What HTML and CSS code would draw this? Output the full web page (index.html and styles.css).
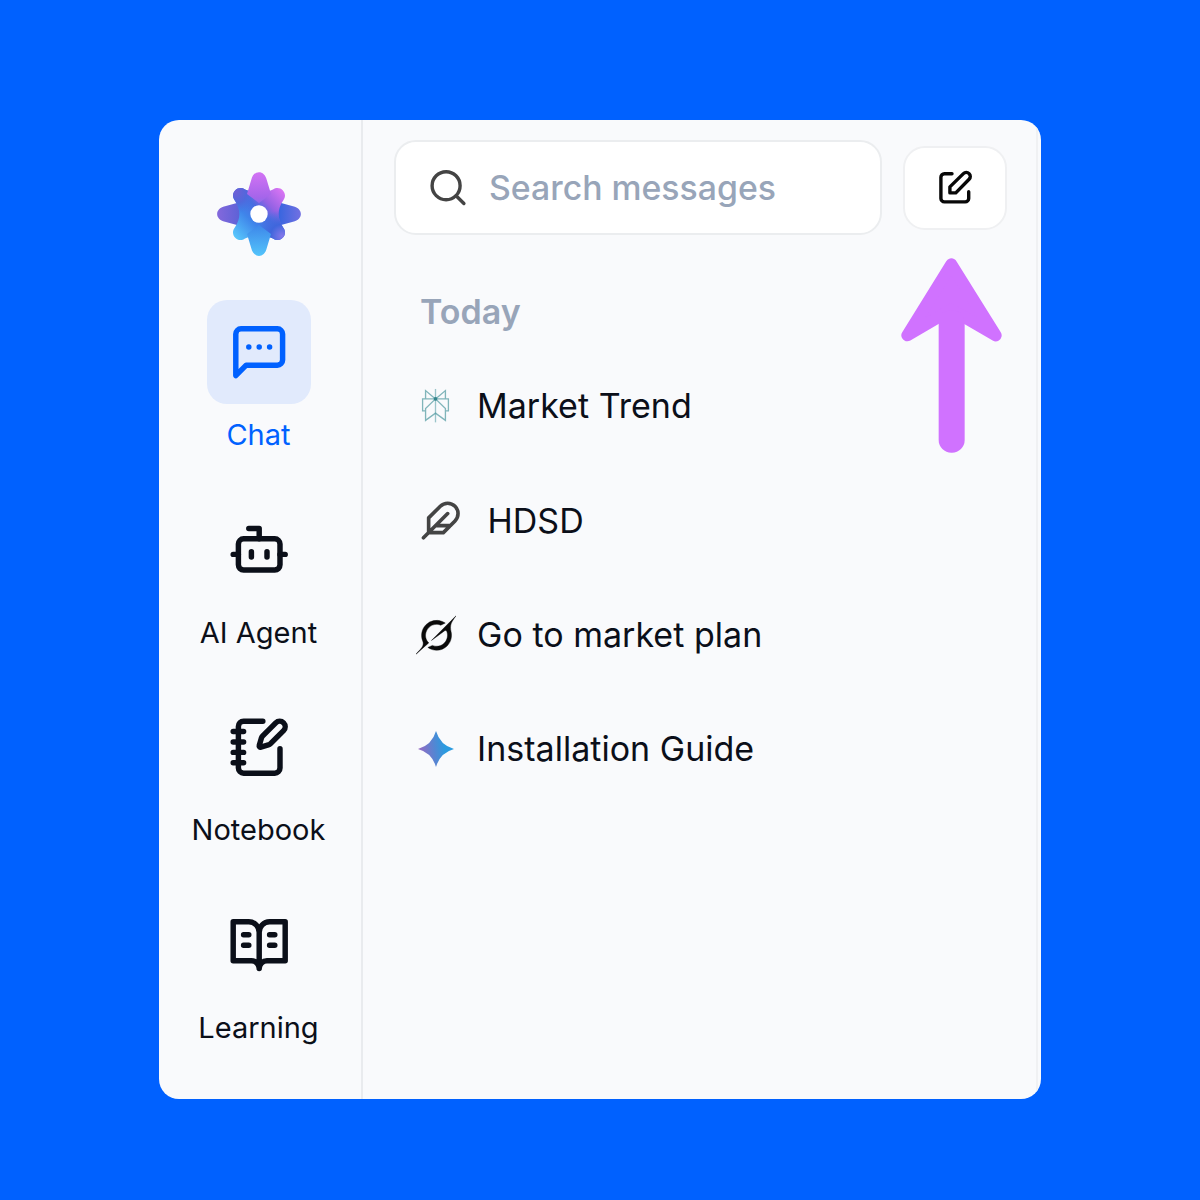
FILE: index.html
```html
<!DOCTYPE html>
<html lang="en">
<head>
<meta charset="utf-8">
<title>Chat</title>
<link rel="stylesheet" href="styles.css">
</head>
<body>
<div class="window">
  <nav class="sidebar">
    <svg class="logo" viewBox="-44 -44 88 88">
      <defs>
        <linearGradient id="lv" x1="0" y1="-42" x2="0" y2="42" gradientUnits="userSpaceOnUse"><stop offset="0" stop-color="#d373f4"/><stop offset=".3" stop-color="#a565ea"/><stop offset=".65" stop-color="#3f8aea"/><stop offset="1" stop-color="#53c4fb"/></linearGradient>
        <linearGradient id="lh" x1="-42" y1="0" x2="42" y2="0" gradientUnits="userSpaceOnUse"><stop offset="0" stop-color="#8468dc"/><stop offset=".3" stop-color="#5961d6"/><stop offset=".75" stop-color="#3b66df"/><stop offset="1" stop-color="#7270e2"/></linearGradient>
        <linearGradient id="ld" x1="-24" y1="24" x2="24" y2="-24" gradientUnits="userSpaceOnUse"><stop offset="0" stop-color="#58c8fc"/><stop offset=".35" stop-color="#3f84ea"/><stop offset=".55" stop-color="#4a6be0"/><stop offset=".7" stop-color="#9462e4"/><stop offset="1" stop-color="#dc75f4"/></linearGradient>
        <radialGradient id="tl" cx="-23" cy="-22" r="22" gradientUnits="userSpaceOnUse"><stop offset="0" stop-color="#6e60d6"/><stop offset=".5" stop-color="#5068dc"/><stop offset="1" stop-color="#4077e4" stop-opacity="0"/></radialGradient>
        <radialGradient id="br" cx="23" cy="22" r="26" gradientUnits="userSpaceOnUse"><stop offset="0" stop-color="#8478ea"/><stop offset=".45" stop-color="#3f66dc"/><stop offset="1" stop-color="#3f6ee0" stop-opacity="0"/></radialGradient>
        <path id="body" d="M-14-24.5L0-19L14-24.5C21-29.5 29.5-21 24.5-14C18-5 18 5 24.5 14C29.5 21 21 29.5 14 24.5L0 19L-14 24.5C-21 29.5-29.5 21-24.5 14C-18 5-18-5-24.5-14C-29.5-21-21-29.5-14-24.5Z"/>
      </defs>
      <path fill="url(#lh)" d="M-13-13.5L-34-7.8C-44.5-5.5-44.5 5.5-34 7.8L-13 13.5H13L34 7.8C44.5 5.5 44.5-5.5 34-7.8L13-13.5Z"/>
      <use href="#body" fill="url(#ld)"/>
      <use href="#body" fill="url(#tl)"/>
      <use href="#body" fill="url(#br)"/>
      <path fill="url(#lv)" d="M0-11L-12-20L-7.8-34C-5.5-44.5 5.5-44.5 7.8-34L12-20ZM0 11L-12 20L-7.8 34C-5.5 44.5 5.5 44.5 7.8 34L12 20Z"/>
      <circle r="8.7" fill="#fff"/>
    </svg>
    <a class="item active">
      <span class="tile"><svg class="ico" viewBox="0 0 24 24"><path d="M21 15a2 2 0 0 1-2 2H7l-4 4V5a2 2 0 0 1 2-2h14a2 2 0 0 1 2 2z"/><path d="M8 10h.01M12 10h.01M16 10h.01"/></svg></span>
      <span class="label">Chat</span>
    </a>
    <a class="item">
      <span class="tile"><svg class="ico" viewBox="0 0 24 24"><path d="M12 8V4H8"/><rect x="4" y="8" width="16" height="12" rx="2"/><path d="M2 14h2M20 14h2M15 13v2M9 13v2"/></svg></span>
      <span class="label">AI Agent</span>
    </a>
    <a class="item">
      <span class="tile"><svg class="ico" viewBox="0 0 24 24"><path d="M13.4 2H6a2 2 0 0 0-2 2v16a2 2 0 0 0 2 2h12a2 2 0 0 0 2-2v-7.4M2 6h4M2 10h4M2 14h4M2 18h4"/><path d="M21.378 5.626a1 1 0 1 0-3.004-3.004l-5.01 5.012a2 2 0 0 0-.506.854l-.837 2.87a.5.5 0 0 0 .62.62l2.87-.837a2 2 0 0 0 .854-.506z"/></svg></span>
      <span class="label">Notebook</span>
    </a>
    <a class="item">
      <span class="tile"><svg class="ico" viewBox="0 0 24 24"><path d="M2 3h6a4 4 0 0 1 4 4v14a3 3 0 0 0-3-3H2zM22 3h-6a4 4 0 0 0-4 4v14a3 3 0 0 1 3-3h7zM6 8h2M6 12h2M16 8h2M16 12h2"/></svg></span>
      <span class="label">Learning</span>
    </a>
  </nav>
  <main class="main">
    <div class="toolbar">
      <div class="search">
        <svg class="search-ico" viewBox="0 0 40 40"><circle cx="18.1" cy="17.7" r="14"/><path d="M28.1 27.7l7.8 7.8"/></svg>
        <span class="placeholder">Search messages</span>
      </div>
      <div class="compose">
        <svg class="compose-ico" viewBox="0 0 40 40"><path d="M17 5.8H9.4a3.5 3.5 0 0 0-3.5 3.5v21.1a3.5 3.5 0 0 0 3.5 3.5h20.8a3.5 3.5 0 0 0 3.5-3.5v-6.7"/><path d="M14.9 24.9v-6L28.4 5.6a3.9 3.9 0 0 1 5.7 5.7L20.8 24.9z"/></svg>
      </div>
    </div>
    <h2 class="heading">Today</h2>
    <div class="row">
      <svg class="row-ico" viewBox="27 27 130 130"><g fill="none" stroke="#4d979e" stroke-width="4"><path stroke-opacity=".55" d="M92 42V143"/><path stroke-opacity=".7" d="M92 72L62 47V72M92 72L122 47V72M62 108H53V72H131V108H122M92 72L62 101V137L92 115L122 137V101Z"/></g><circle cx="92" cy="72" r="5.5" fill="#33858d"/></svg>
      <span>Market Trend</span>
    </div>
    <div class="row">
      <svg class="row-ico feather" viewBox="0 0 24 24"><path d="M20.24 12.24a6 6 0 0 0-8.49-8.49L5 10.5V19h8.5zM16 8 2 22M17.5 15H9"/></svg>
      <span>HDSD</span>
    </div>
    <div class="row">
      <svg class="row-ico grok" viewBox="0 0 24 24"><path d="M9.27 15.29l7.978-5.897c.391-.29.95-.177 1.137.272.98 2.369.542 5.215-1.41 7.169-1.951 1.954-4.667 2.382-7.149 1.406l-2.711 1.257c3.889 2.661 8.611 2.003 11.562-.953 2.341-2.344 3.066-5.539 2.388-8.42l.006.007c-.983-4.232.242-5.924 2.75-9.383.06-.082.12-.164.179-.248l-3.301 3.305v-.01L9.267 15.292M7.623 16.723c-2.792-2.67-2.31-6.801.071-9.184 1.761-1.763 4.647-2.483 7.166-1.425l2.705-1.25a7.808 7.808 0 00-1.829-1A8.975 8.975 0 005.984 5.83c-2.533 2.536-3.33 6.436-1.962 9.764 1.022 2.487-.653 4.246-2.34 6.022-.599.63-1.199 1.259-1.682 1.925l7.62-6.815"/></svg>
      <span>Go to market plan</span>
    </div>
    <div class="row">
      <svg class="row-ico star" viewBox="-20 -20 40 40"><defs><linearGradient id="gm" x1="0" y1=".6" x2="1" y2=".45"><stop offset="0" stop-color="#9a68c2"/><stop offset=".45" stop-color="#5685d2"/><stop offset=".75" stop-color="#2a9be0"/></linearGradient></defs><path fill="url(#gm)" d="M0-18Q4-4 18 0Q4 4 0 18Q-4 4-18 0Q-4-4 0-18Z"/></svg>
      <span>Installation Guide</span>
    </div>
  </main>
  <svg class="arrow" viewBox="30 20 312 594"><path d="M184 42L317 255L184 178L52 255Z"/><rect x="146" y="180" width="78" height="427" rx="38"/></svg>
</div>
</body>
</html>
```
FILE: styles.css
```css
* { box-sizing: border-box; }

body {
  margin: 0;
  width: 1200px;
  height: 1200px;
  padding: 120px 159px 101px;
  background: #0061ff;
  font-family: Inter, "Liberation Sans", sans-serif;
  color: #0b0f19;
}

.window {
  position: relative;
  display: flex;
  width: 882px;
  height: 979px;
  overflow: hidden;
  border-radius: 20px;
  background: #f9fafc;
}

.sidebar {
  display: flex;
  flex-direction: column;
  align-items: center;
  width: 204px;
  padding: 49.5px 2px 0 0;
  border-right: 2px solid #e9ebee;
}

.logo { width: 88px; height: 88px; margin-bottom: 42.5px; flex: none; }

.item {
  display: flex;
  flex-direction: column;
  align-items: center;
  height: 197.6px;
  flex: none;
}

.tile {
  display: flex;
  align-items: center;
  justify-content: center;
  width: 104px;
  height: 104px;
  border-radius: 20px;
}

.ico {
  width: 62.4px;
  height: 62.4px;
  fill: none;
  stroke: currentColor;
  stroke-width: 2.1;
  stroke-linecap: round;
  stroke-linejoin: round;
}

.label {
  margin: 11px 1px 0 0;
  font-size: 29px;
  font-weight: 435;
  line-height: 40px;
  white-space: nowrap;
}

.active { color: #0061ff; }
.active .tile { background: #e1eafc; }

.main {
  width: 675px;
  padding: 20px 0 0 31px;
  border-right: 2px solid #f0f1f3;
}

.toolbar { display: flex; align-items: center; gap: 21px; }

.search {
  display: flex;
  align-items: center;
  gap: 21px;
  width: 488px;
  height: 95px;
  padding-left: 32px;
  border: 2px solid #ebedef;
  border-radius: 22px;
  background: #fff;
}

.search-ico {
  width: 40px;
  height: 40px;
  fill: none;
  stroke: #444;
  stroke-width: 3.4;
  stroke-linecap: round;
}

.placeholder { font-size: 33.8px; font-weight: 450; color: #98a5b9; }

.compose {
  display: flex;
  align-items: center;
  justify-content: center;
  width: 104px;
  height: 84px;
  border: 2px solid #eff0f2;
  border-radius: 22px;
  background: #fff;
}

.compose-ico {
  width: 40px;
  height: 40px;
  fill: none;
  stroke: #080808;
  stroke-width: 3.4;
  stroke-linecap: round;
  stroke-linejoin: round;
}

.heading {
  margin: 56px 0 15.6px 26px;
  font-size: 34px;
  line-height: 42px;
  font-weight: 640;
  color: #98a5b9;
}

.row {
  display: flex;
  align-items: center;
  gap: 20px;
  height: 114.4px;
  padding-left: 20px;
  font-size: 34px;
  font-weight: 440;
  letter-spacing: 0.02px;
  white-space: nowrap;
}

.row-ico { width: 43px; height: 43px; flex: none; }

.feather {
  width: 41.5px;
  margin: 0 6.5px 0 5.5px;
  fill: none;
  stroke: #444;
  stroke-width: 2.1;
  stroke-linecap: round;
  stroke-linejoin: round;
}

.grok { width: 40px; height: 40px; margin: 0 1px 0 2px; fill: #0a0a0a; stroke: #0a0a0a; stroke-width: .25; }
.star { width: 40px; height: 40px; margin: 0 1.5px 0 1.5px; }

.arrow {
  position: absolute;
  left: 740.7px;
  top: 136.7px;
  width: 104px;
  height: 198px;
  fill: #d072ff;
}

.arrow path { stroke: #d072ff; stroke-width: 36; stroke-linejoin: round; }
```
